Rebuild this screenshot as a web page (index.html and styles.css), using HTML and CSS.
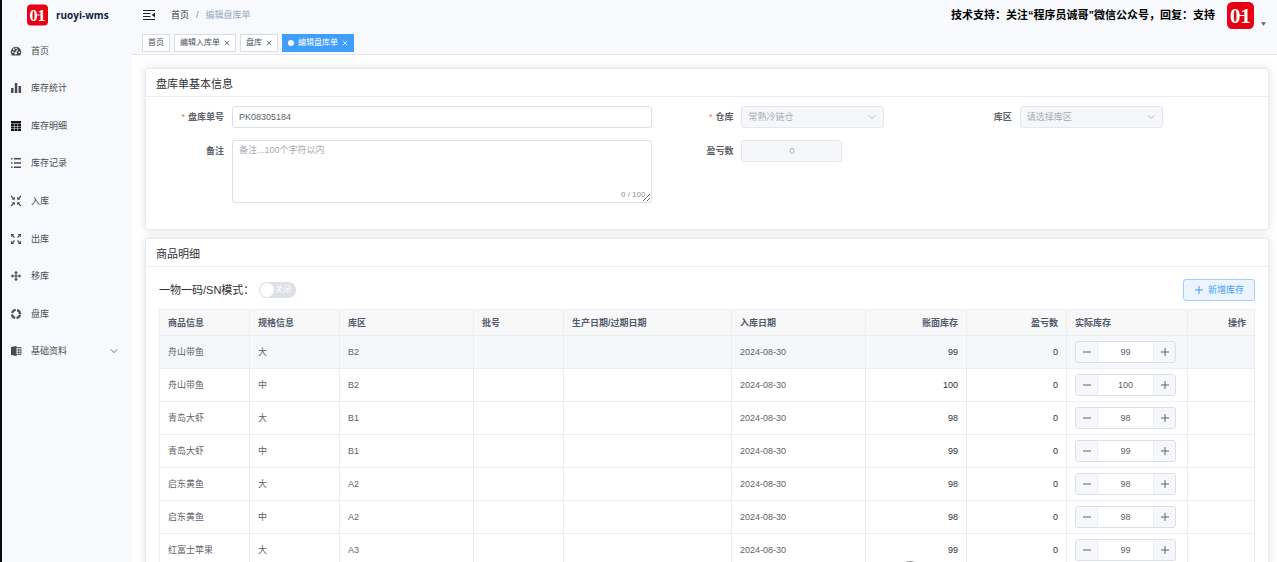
FILE: index.html
```html
<!DOCTYPE html>
<html lang="zh-CN">
<head>
<meta charset="utf-8">
<title>ruoyi-wms</title>
<link rel="stylesheet" href="styles.css">
</head>
<body>
<svg class="defs" aria-hidden="true">
  <symbol id="down" viewBox="0 0 10 10"><path d="M1 3l4 4 4-4" fill="none" stroke="currentColor"/></symbol>
  <symbol id="close" viewBox="0 0 8 8"><path d="M1 1l6 6M7 1L1 7" fill="none" stroke="currentColor"/></symbol>
  <symbol id="plus" viewBox="0 0 10 10"><path d="M1 5h8M5 1v8" fill="none" stroke="currentColor"/></symbol>
  <symbol id="minus" viewBox="0 0 10 10"><path d="M1 5h8" fill="none" stroke="currentColor"/></symbol>
</svg>
<div class="app">
  <aside class="sidebar">
    <a class="brand" href="#"><svg class="brand-logo" viewBox="0 0 26 26"><rect width="26" height="26" rx="5" fill="#e60012"/><text x="3" y="20" class="logo-text">0</text><text x="13" y="20" class="logo-text">1</text><path d="M11 13h6" stroke="#fff"/></svg><span>ruoyi-wms</span></a>
    <nav class="menu">
      <a href="#"><svg viewBox="0 0 12 12"><path fill="currentColor" fill-rule="evenodd" d="M2 10.500A5.300 5.300 0 1 1 10 10.500zM2 6.500v1.500h1.500V6.500zM3 3.600v1.600h1.500V3.600zM5.400 2.500v1.500h1.300V2.500zM8.600 6.500v1.500h1.500V6.500zM7.200 4.200L5.600 7a1.200 1.200 0 1 0 1 .4l1.500-2.800z"/></svg>首页</a>
      <a href="#"><svg viewBox="0 0 12 12"><path fill="currentColor" d="M1 6h2.500v5H1zM4.800 1h2.500v10H4.800zM8.600 4h2.500v7H8.600z"/></svg>库存统计</a>
      <a href="#"><svg viewBox="0 0 12 12"><path fill="#111" d="M1 1h10v2.400H1zM1 4h3v2H1zM4.500 4h3v2h-3zM8 4h3v2H8zM1 6.500h3v2H1zM4.500 6.500h3v2h-3zM8 6.500h3v2H8zM1 9h3v2H1zM4.500 9h3v2h-3zM8 9h3v2H8z"/></svg>库存明细</a>
      <a href="#"><svg viewBox="0 0 12 12"><path fill="currentColor" d="M1 1h1.500v1.500H1zM1 5.200h1.500v1.500H1zM1 9.500h1.500V11H1zM4 1h7v1.500H4zM4 5.200h7v1.500H4zM4 9.500h7V11H4z"/></svg>库存记录</a>
      <a href="#"><svg viewBox="0 0 12 12"><path stroke="currentColor" stroke-width="1.200" fill="none" d="M1 1l3 3M11 1L8 4M1 11l3-3M11 11L8 8"/><path fill="currentColor" d="M4.800 1.800v3h-3zM7.200 1.800v3h3zM4.800 10.200v-3h-3zM7.200 10.200v-3h3z"/></svg>入库</a>
      <a href="#"><svg viewBox="0 0 12 12"><path stroke="currentColor" stroke-width="1.200" fill="none" d="M2 2l2.500 2.500M10 2L7.500 4.500M2 10l2.500-2.500M10 10L7.500 7.500"/><path fill="currentColor" d="M1 1h3.300L1 4.300zM11 1H7.700L11 4.300zM1 11h3.300L1 7.700zM11 11H7.700L11 7.700z"/></svg>出库</a>
      <a href="#"><svg viewBox="0 0 12 12"><path stroke="currentColor" stroke-width="1.200" fill="none" d="M6 2v8M2 6h8"/><path fill="currentColor" d="M6 .8l2 2.400H4zM6 11.200l2-2.400H4zM.8 6l2.400-2v4zM11.200 6L8.800 4v4z"/></svg>移库</a>
      <a href="#"><svg viewBox="0 0 12 12"><circle cx="6" cy="6" r="4" fill="none" stroke="currentColor" stroke-width="2.200" stroke-dasharray="5 1.283" stroke-dashoffset="-.64"/></svg>盘库</a>
      <a href="#"><svg viewBox="0 0 12 12"><path fill="currentColor" d="M1 2l5.500-1v10L1 10z"/><path fill="none" stroke="currentColor" stroke-width=".8" d="M6 2.500h5v7H6M7 5h4M7 7.300h4M8.800 3v6"/></svg>基础资料<svg class="arrow"><use href="#down"/></svg></a>
    </nav>
  </aside>
  <div class="page">
    <header class="topbar">
      <div class="navbar">
        <button class="fold" aria-label="折叠菜单"><svg viewBox="0 0 12 12"><path fill="none" stroke="#222" stroke-width="1.200" d="M0 1.500h12M0 4.500h7.500M0 7.500h7.500M0 10.500h12"/><path fill="#222" d="M12 3.500v5L8.800 6z"/></svg></button>
        <nav class="crumbs"><a href="#">首页</a><i>/</i><span>编辑盘库单</span></nav>
        <strong class="support">技术支持：关注“程序员诚哥”微信公众号，回复：支持</strong>
        <button class="user" aria-label="用户"><svg class="avatar" viewBox="0 0 26 26"><rect width="26" height="26" rx="5" fill="#e60012"/><text x="3" y="20" class="logo-text">0</text><text x="13" y="20" class="logo-text">1</text><path d="M11 13h6" stroke="#fff"/></svg><svg class="caret" viewBox="0 0 6 4"><path fill="#606266" d="M0 0h6L3 4z"/></svg></button>
      </div>
      <nav class="tabs">
        <a href="#">首页</a>
        <a href="#">编辑入库单<svg><use href="#close"/></svg></a>
        <a href="#">盘库<svg><use href="#close"/></svg></a>
        <a href="#" class="active">编辑盘库单<svg><use href="#close"/></svg></a>
      </nav>
    </header>
    <main>
      <section class="card">
        <h2>盘库单基本信息</h2>
        <form class="form">
          <div class="field"><label class="required" for="no">盘库单号</label><input id="no" value="PK08305184"></div>
          <div class="field"><label class="required" for="wh">仓库</label><span class="select"><select id="wh" disabled><option>常熟冷链仓</option></select><svg><use href="#down"/></svg></span></div>
          <div class="field"><label for="area">库区</label><span class="select"><select id="area" disabled><option>请选择库区</option></select><svg><use href="#down"/></svg></span></div>
          <div class="field"><label for="remark">备注</label><span class="area"><textarea id="remark" placeholder="备注...100个字符以内"></textarea><small>0 / 100</small></span></div>
          <div class="field"><label for="diff">盈亏数</label><input id="diff" class="diff" value="0" disabled></div>
        </form>
      </section>
      <section class="card">
        <h2>商品明细</h2>
        <div class="detail">
          <div class="tools">
            <label for="sn">一物一码/SN模式：</label>
            <span class="switch"><input type="checkbox" role="switch" id="sn"><span>关闭</span></span>
            <button class="add"><svg><use href="#plus"/></svg>新增库存</button>
          </div>
          <table>
            <colgroup><col class="w90"><col class="w90"><col class="w134"><col class="w90"><col class="w168"><col class="w134"><col class="w101"><col class="w100"><col class="w121"><col class="w67"></colgroup>
            <thead><tr><th>商品信息</th><th>规格信息</th><th>库区</th><th>批号</th><th>生产日期/过期日期</th><th>入库日期</th><th class="num">账面库存</th><th class="num">盈亏数</th><th>实际库存</th><th class="num">操作</th></tr></thead>
            <tbody id="rows"></tbody>
          </table>
        </div>
      </section>
    </main>
  </div>
</div>
<div class="bubble"></div>
<script src="app.js"></script>
</body>
</html>
```
FILE: styles.css
```css
* { box-sizing: border-box; }
body {
  margin: 0;
  height: 100vh;
  overflow: hidden;
  font: 9px/14px "Liberation Sans", "Noto Sans CJK SC", sans-serif;
  color: #606266;
  background: #fff;
}
a { color: inherit; text-decoration: none; }
button { font: inherit; color: inherit; border: 0; padding: 0; background: none; }
svg { display: block; flex: none; width: 10px; height: 10px; }
.defs { position: absolute; width: 0; height: 0; }
.logo-text { font: bold 20px "Liberation Serif", serif; fill: #fff; }

.app { display: flex; height: 100%; border-left: 2px solid #0c0d10; }
.sidebar { width: 130px; flex: none; background: #f7f9fd; }
.brand {
  display: flex;
  align-items: center;
  gap: 8px;
  height: 30px;
  padding-left: 25px;
  font: bold 10px/14px "Open Sans", sans-serif;
  color: #10233f;
}
.brand-logo { width: 21px; height: 22px; }
.menu { display: grid; grid-auto-rows: 1fr; min-height: 338px; margin-top: 2px; color: #484b52; }
.menu a { display: flex; align-items: center; gap: 9px; padding: 0 14px 0 8px; }
.menu svg { width: 12px; height: 12px; }
.menu .arrow { width: 8px; height: 8px; margin-left: auto; }

.page { flex: 1; min-width: 0; }
.topbar { background: #f7f9fd; border-bottom: 1px solid #e3e6ec; }
.navbar { display: flex; align-items: center; height: 30px; padding: 0 11px; }
.fold svg { width: 12px; height: 12px; }
.crumbs { display: flex; gap: 7px; margin-left: 16px; color: #97a8be; }
.crumbs a { color: #303133; }
.crumbs i { font-style: normal; color: #888; }
.support { margin-left: auto; font-size: 11px; color: #000; }
.user { display: flex; align-items: flex-end; gap: 7px; margin-left: 12px; }
.avatar { width: 27px; height: 27px; }
.caret { width: 5px; height: 4px; margin-bottom: 3px; }
.tabs { display: flex; gap: 4px; padding: 4px 10px 2px; font-size: 8px; }
.tabs a {
  display: flex;
  align-items: center;
  gap: 4px;
  height: 18px;
  padding: 0 5px;
  border: 1px solid #d8dce5;
  background: #fff;
  color: #495060;
}
.tabs svg { width: 6px; height: 6px; }
.tabs .active { background: #409eff; border-color: #409eff; color: #fff; }
.tabs .active::before { content: ""; width: 6px; height: 6px; border-radius: 50%; background: #fff; }

main { display: grid; gap: 8px; padding: 13px 10px 0 13px; }
.card {
  border-radius: 3px;
  background: #fff;
  border: 1px solid #e8eaee;
  box-shadow: 0 0 8px rgba(0, 0, 0, .12);
}
h2 {
  margin: 0;
  padding: 7px 10px 3px;
  font-size: 11px;
  font-weight: normal;
  line-height: 17px;
  color: #303133;
  border-bottom: 1px solid #ebeef5;
}
.form {
  display: grid;
  grid-template-columns: 496fr 265fr 314fr;
  gap: 12px 13px;
  padding: 9px 10px 26px;
}
.field { display: flex; gap: 8px; align-items: flex-start; }
.field label { width: 68px; flex: none; text-align: right; line-height: 22px; font-weight: bold; }
.required::before { content: "*"; margin-right: 3px; color: #f56c6c; font-weight: normal; }
input, select, textarea {
  display: block;
  width: 100%;
  min-width: 0;
  height: 22px;
  margin: 0;
  padding: 0 6px;
  font: inherit;
  color: #606266;
  border: 1px solid #dcdfe6;
  border-radius: 3px;
  background: #fff;
}
textarea { height: 63px; padding: 2px 6px; }
textarea::placeholder { color: #a8abb2; }
:disabled { color: #a8abb2; background: #f5f7fa; border-color: #e4e7ed; opacity: 1; }
.select { position: relative; width: 143px; }
.select select { appearance: none; }
.select svg { position: absolute; right: 8px; top: 7px; width: 8px; height: 8px; color: #a8abb2; }
.area { position: relative; flex: 1; }
.area small { position: absolute; right: 7px; bottom: 1px; font-size: 8px; color: #909399; }
.diff { width: 101px; text-align: center; }

.detail { padding: 12px 13px 0; }
.tools { display: flex; align-items: center; margin-bottom: 8px; }
.tools label { font-size: 11px; color: #303133; }
.switch { position: relative; margin-left: 5px; }
.switch input { appearance: none; width: 37px; height: 16px; border: 0; border-radius: 8px; background: #dcdfe6; }
.switch input::before { content: ""; position: absolute; left: 1px; top: 1px; width: 14px; height: 14px; border-radius: 50%; background: #fff; }
.switch span { position: absolute; right: 5px; top: 1px; font-size: 8px; color: #fff; pointer-events: none; }
.add {
  display: flex;
  align-items: center;
  gap: 4px;
  height: 22px;
  margin-left: auto;
  padding: 0 10px;
  color: #409eff;
  border: 1px solid #a0cfff;
  border-radius: 3px;
  background: #ecf5ff;
}

table { width: 100%; table-layout: fixed; border-collapse: collapse; }
.w67 { width: 67px; }
.w90 { width: 90px; }
.w100 { width: 100px; }
.w101 { width: 101px; }
.w121 { width: 121px; }
.w134 { width: 134px; }
.w168 { width: 168px; }
th, td { height: 33px; padding: 0 8px; text-align: left; border: 1px solid #ebeef5; }
th { height: 26px; background: #f8f8f9; color: #515a6e; }
.num { text-align: right; }
td.num { color: #303133; }
tbody tr:first-child { background: #f5f7fa; }
.stepper { display: flex; width: 101px; height: 22px; border: 1px solid #dcdfe6; border-radius: 3px; overflow: hidden; }
.stepper button { display: grid; place-items: center; width: 21px; flex: none; background: #f5f7fa; }
.stepper input { height: 20px; padding: 0; text-align: center; border-width: 0 1px; border-color: #ebeef5; border-radius: 0; }
.bubble { position: fixed; left: calc(50% + 258px); bottom: -25px; width: 26px; height: 26px; border-radius: 50%; background: #999; }
```
FILE: app.js
```js
const items = [
  ["舟山带鱼", "大", "B2", 99],
  ["舟山带鱼", "中", "B2", 100],
  ["青岛大虾", "大", "B1", 98],
  ["青岛大虾", "中", "B1", 99],
  ["启东黄鱼", "大", "A2", 98],
  ["启东黄鱼", "中", "A2", 98],
  ["红富士苹果", "大", "A3", 99]
];
document.getElementById("rows").innerHTML = items.map(([name, spec, area, qty]) => `
  <tr><td>${name}</td><td>${spec}</td><td>${area}</td><td></td><td></td><td>2024-08-30</td>
  <td class="num">${qty}</td><td class="num">0</td>
  <td><div class="stepper"><button aria-label="减少"><svg><use href="#minus"/></svg></button><input aria-label="实际库存" value="${qty}"><button aria-label="增加"><svg><use href="#plus"/></svg></button></div></td><td></td></tr>`).join("");
```
